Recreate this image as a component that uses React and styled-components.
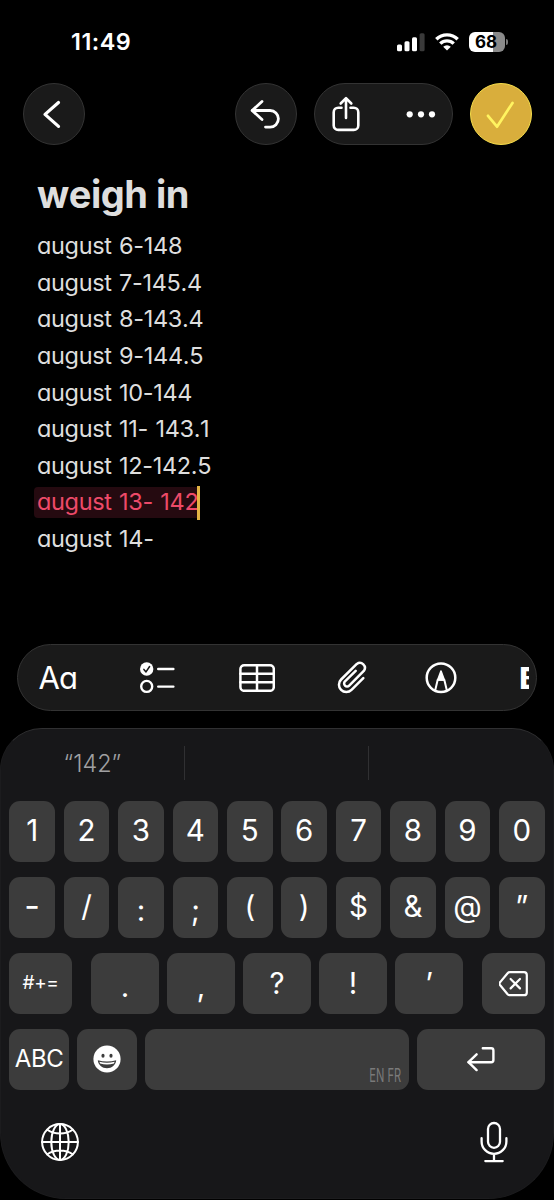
import React from 'react';
import styled, { createGlobalStyle } from 'styled-components';

const GlobalStyle = createGlobalStyle`
* {
  box-sizing: border-box;
}
body {
  margin: 0;
  background: #000;
  font-family: Inter, "Liberation Sans", sans-serif;
  font-feature-settings: "cv11";
  font-kerning: none;
}
svg {
  display: block;
  flex: none;
}
`;

const Phone = styled.div`
width: 554px;
height: 1200px;
background: #000;
color: #fff;
display: flex;
flex-direction: column;
overflow: hidden;
`;

const StatusBar = styled.div`
height: 83px;
padding: 0 46px 0 71px;
display: flex;
align-items: center;
justify-content: space-between;
`;
const Time = styled.div`
font-size: 23.4px;
font-weight: 600;
line-height: 28px;
letter-spacing: 0.5px;
`;
const StatusIcons = styled.div`
display: flex;
align-items: center;
gap: 10px;
`;
const Battery = styled.div`
display: flex;
align-items: center;
gap: 1px;
`;
const BatteryBody = styled.div`
width: 36px;
height: 20px;
border-radius: 6px;
background: linear-gradient(90deg, #fff ${p => p.$level}%, #8a8a8a ${p => p.$level}%);
color: #000;
font-size: 17px;
font-weight: 700;
line-height: 20px;
text-align: center;
padding-right: 2px;
`;
const BatteryTip = styled.div`
width: 2px;
height: 6px;
border-radius: 0 2px 2px 0;
background: #777;
`;

const NavBar = styled.div`
height: 62px;
padding: 0 22.5px 0 23px;
display: flex;
gap: 17px;
`;
const RoundButton = styled.button`
width: 62px;
height: 62px;
padding: 0;
border-radius: 50%;
border: 1px solid ${p => (p.$done ? '#f5dc4a' : '#333')};
background: ${p => (p.$done ? '#d9ae3c' : '#1a1a1a')};
color: ${p => (p.$done ? '#fff460' : '#fff')};
display: flex;
align-items: center;
justify-content: center;
margin-right: ${p => (p.$first ? 'auto' : '0')};
`;
const ButtonGroup = styled.div`
width: 139px;
height: 62px;
border-radius: 31px;
border: 1px solid #333;
background: #1a1a1a;
display: flex;
align-items: center;
justify-content: space-between;
padding: 0 15.5px 0 17.5px;
`;

const Note = styled.div`
height: 499px;
padding: 28px 37px 0;
`;
const Title = styled.h1`
margin: 0;
font-size: 38px;
line-height: 43px;
font-weight: 700;
letter-spacing: -0.5px;
color: #dedede;
`;
const Entries = styled.div`
padding-top: 12px;
`;
const Entry = styled.div`
height: 36.65px;
line-height: 36.65px;
font-size: 23.5px;
font-weight: 400;
letter-spacing: -0.33px;
word-spacing: 1.1px;
color: #dedede;
white-space: pre;
display: flex;
align-items: center;
`;
const Marked = styled.span`
height: 31px;
line-height: 30px;
margin-left: -3px;
padding-left: 3px;
border-radius: 4px 0 0 4px;
background: #250a10;
color: #ee4a69;
`;
const Caret = styled.span`
width: 2.5px;
height: 34px;
margin-left: -1px;
background: #e3b444;
`;

const Toolbar = styled.div`
width: 520px;
height: 67px;
margin-left: 17px;
flex: none;
border-radius: 34px;
border: 1px solid #333;
background: #1a1a1a;
`;
const ToolStrip = styled.div`
width: 511px;
height: 65px;
padding-left: 20.5px;
overflow: hidden;
display: flex;
align-items: center;
`;
const Tool = styled.div`
flex: none;
margin-left: ${p => p.$gap || 0}px;
`;
const FormatText = styled.div`
width: 38px;
font-size: 31px;
line-height: 36px;
letter-spacing: -0.8px;
`;
const BoldText = styled.div`
font-size: 30px;
line-height: 36px;
font-weight: 800;
`;

const Keyboard = styled.div`
height: 471px;
flex: none;
margin-top: 17px;
border-radius: 42px 42px 66px 66px;
border: 1px solid #1c1c1e;
border-top: 1.5px solid #303032;
background: #171719;
padding: 0 8.3px;
`;
const Suggestions = styled.div`
height: 72px;
margin: 0 -8.3px;
display: flex;
align-items: center;
`;
const Suggestion = styled.div`
flex: 1;
height: 34px;
line-height: 35px;
margin: 0 0 4px -0.6px;
border-left: ${p => (p.$divided ? '1.5px solid #303032' : 'none')};
font-size: 23.5px;
font-weight: 300;
text-align: center;
color: #a0a0a2;
`;
const KeyRow = styled.div`
display: flex;
justify-content: space-between;
height: 60.7px;
margin-bottom: 15.4px;
`;
const Key = styled.div`
width: ${p => p.$w || 45.7}px;
margin: 0 ${p => p.$mr || 0}px 0 ${p => p.$ml || 0}px;
height: 60.7px;
border-radius: 11px;
background: #3c3c3c;
display: flex;
align-items: center;
justify-content: center;
font-size: ${p => p.$size || 29.5}px;
font-weight: 400;
line-height: 36px;
letter-spacing: ${p => p.$track || 0}px;
padding-top: ${p => p.$drop || 0}px;
padding-bottom: ${p => (p.$lift === undefined ? 2 : p.$lift)}px;
`;
const SpaceKey = styled(Key)`
align-items: flex-end;
justify-content: flex-end;
padding: 0 7px 5px 0;
`;
const Languages = styled.span`
font-size: 18.5px;
line-height: 20px;
color: #7a7a7a;
white-space: nowrap;
transform: scaleX(0.6);
transform-origin: right center;
`;
const BottomRow = styled.div`
display: flex;
justify-content: space-between;
align-items: center;
padding: 16px 37px 0 32px;
`;

const stroke = { fill: 'none', stroke: 'currentColor', strokeLinecap: 'round', strokeLinejoin: 'round' };

const SignalIcon = () => (
  <svg width="28" height="20" viewBox="0 0 28 20" fill="#fff">
    <rect x="0" y="12.5" width="5" height="6.8" rx="1.5" />
    <rect x="7.5" y="9.3" width="5" height="10" rx="1.5" />
    <rect x="15" y="5.3" width="5" height="14" rx="1.5" />
    <rect x="22.6" y="1.3" width="5" height="18" rx="1.5" fill="#3a3a3a" />
  </svg>
);

const WifiIcon = () => (
  <svg width="24" height="20" viewBox="0 0 24 20" fill="none" stroke="#fff" strokeWidth="3.4">
    <path d="M1.3 7.3a15.2 15.2 0 0 1 21.4 0" />
    <path d="M5.3 11.6a9.5 9.5 0 0 1 13.4 0" />
    <path d="M12 18.6L8.2 14.8a5.4 5.4 0 0 1 7.6 0z" fill="#fff" stroke="none" />
  </svg>
);

const BackIcon = () => (
  <svg width="60" height="60" viewBox="1 1 60 60" {...stroke} strokeWidth="3.2">
    <path d="M35.5 19.5L22 31.4l13.5 12" />
  </svg>
);

const UndoIcon = () => (
  <svg width="60" height="60" viewBox="1.5 1 60 60" {...stroke} strokeWidth="2.8">
    <path d="M27.5 18.5L17.6 27.5l9.9 9" />
    <path d="M18 27.5h17.6a8.3 8.3 0 0 1 0 16.6H31" />
  </svg>
);

const ShareIcon = () => (
  <svg width="28" height="36" viewBox="0 0 28 36" {...stroke} strokeWidth="2.6">
    <path d="M9.5 11.7H6.2a4.5 4.5 0 0 0-4.5 4.5v13.2a4.5 4.5 0 0 0 4.5 4.5h15.6a4.5 4.5 0 0 0 4.5-4.5V16.2a4.5 4.5 0 0 0-4.5-4.5h-3.3" />
    <path d="M14 22V2.5M8.7 7.5L14 2.2l5.3 5.3" />
  </svg>
);

const MoreIcon = () => (
  <svg width="30" height="8" viewBox="0 0 30 8" fill="#fff">
    <circle cx="3.7" cy="4.3" r="3.1" />
    <circle cx="15" cy="4.3" r="3.1" />
    <circle cx="26" cy="4.3" r="3.1" />
  </svg>
);

const DoneIcon = () => (
  <svg width="60" height="60" viewBox="1.5 1 60 60" {...stroke} strokeWidth="2.7">
    <path d="M18.5 32.8l9 10.9L43 20" />
  </svg>
);

const ChecklistIcon = () => (
  <svg width="36" height="32" viewBox="0 0 36 32" {...stroke} strokeWidth="2.4">
    <circle cx="6.7" cy="7" r="6.7" fill="#fff" stroke="none" />
    <path d="M3.9 7.4l2.1 2.5 3.6-5.4" stroke="#1a1a1a" strokeWidth="1.5" />
    <circle cx="6.7" cy="24.4" r="5.5" />
    <path d="M18.2 7h15.2M18.2 24.6h15.2" />
  </svg>
);

const TableIcon = () => (
  <svg width="36" height="28" viewBox="0 0 36 28" {...stroke} strokeWidth="2.5">
    <rect x="1.4" y="1.3" width="33.4" height="25.5" rx="3.8" />
    <path d="M18 1.3v25.5M1.4 9.8h33.4M1.4 18.3h33.4" />
  </svg>
);

const ClipIcon = () => (
  <svg width="30" height="33" viewBox="0 0 30 33" {...stroke} strokeWidth="2.5">
    <path d="M26.3 17.1L14.5 28.9a7.3 7.3 0 0 1-10.4-10.4L19.8 2.9a5 5 0 0 1 7 7L12.2 24.6a2.95 2.95 0 0 1-4.2-4.2L18.7 9.8" />
  </svg>
);

const MarkupIcon = () => (
  <svg width="32" height="32" viewBox="0 0 32 32" {...stroke} strokeWidth="2.5">
    <circle cx="16" cy="15.7" r="14.3" />
    <path d="M10.2 28.3l2.5-10.5h6.6l2.5 10.5" strokeWidth="2" />
    <path d="M16 9l-3.3 9h6.6z" fill="#fff" strokeWidth="1.6" />
  </svg>
);

const DeleteIcon = () => (
  <svg width="30" height="26" viewBox="0.7 0 30 26" {...stroke} strokeWidth="2.2">
    <path d="M11.5 1.2h14.2a2.8 2.8 0 0 1 2.8 2.8v17.4a2.8 2.8 0 0 1-2.8 2.8H11.5a3 3 0 0 1-2.2-1L1.9 14.3a2.3 2.3 0 0 1 0-3.2l7.400-8.900a3 3 0 0 1 2.200-1z" />
    <path d="M12.3 8l9.4 9.4M21.7 8l-9.4 9.4" />
  </svg>
);

const EmojiIcon = () => (
  <svg width="28" height="28" viewBox="0 0 28 28">
    <circle cx="14" cy="14" r="13.6" fill="#fff" />
    <ellipse cx="10" cy="10.7" rx="1.6" ry="2" fill="#3c3c3c" />
    <ellipse cx="18" cy="10.7" rx="1.6" ry="2" fill="#3c3c3c" />
    <path d="M4.8 15.2q9.2 2.8 18.4 0c-.4 4.7-4.4 8-9.2 8s-8.8-3.3-9.2-8z" fill="#3c3c3c" />
    <path d="M6.4 16.7q7.6 1.9 15.2 0l-.6 1.8q-7 1.8-14 0z" fill="#fff" />
  </svg>
);

const ReturnIcon = () => (
  <svg width="28" height="26" viewBox="0 0 28 26" {...stroke} strokeWidth="2.4">
    <path d="M15.8 2.2h8.4a2.2 2.2 0 0 1 2.2 2.2v9.6a2.2 2.2 0 0 1-2.2 2.2H1.6" />
    <path d="M9.6 8.3L1.5 16.2l8.1 7.9" />
  </svg>
);

const GlobeIcon = () => (
  <svg width="38" height="38" viewBox="0 0 38 38" {...stroke} strokeWidth="2">
    <circle cx="19" cy="19" r="17.9" />
    <ellipse cx="19" cy="19" rx="8.7" ry="17.9" />
    <path d="M19 1v36M1 19h36M6.3 6.7c7 5 18.4 5 25.4 0M6.3 31.3c7-5 18.4-5 25.4 0" />
  </svg>
);

const MicIcon = () => (
  <svg width="28" height="42" viewBox="0 0 28 42" {...stroke} strokeWidth="2.3">
    <rect x="8" y="2" width="12" height="24.8" rx="6" />
    <path d="M1.6 17.2v3.2a12.4 12.4 0 0 0 24.8 0v-3.2M14 33v7M5.3 40.1h17.4" />
  </svg>
);

const entries = [
  'august 6-148',
  'august 7-145.4',
  'august 8-143.4',
  'august 9-144.5',
  'august 10-144',
  'august 11- 143.1',
  'august 12-142.5',
  'august 13- 142',
  'august 14-',
];
const current = 7;

const digits = ['1', '2', '3', '4', '5', '6', '7', '8', '9', '0'];
const symbols = ['-', '/', ':', ';', '(', ')', '$', '&', '@', '”'];
const punctuation = ['.', ',', '?', '!', '’'];

// low glyphs sit under the middle of their key
const drops = { ':': 7, ';': 7, '.': 7, ',': 7 };
const sizes = { '-': 34 };

const App = () => {
  return (
    <Phone>
      <GlobalStyle />
      <StatusBar>
        <Time>11:49</Time>
        <StatusIcons>
          <SignalIcon />
          <WifiIcon />
          <Battery>
            <BatteryBody $level={68}>68</BatteryBody>
            <BatteryTip />
          </Battery>
        </StatusIcons>
      </StatusBar>

      <NavBar>
        <RoundButton $first><BackIcon /></RoundButton>
        <RoundButton><UndoIcon /></RoundButton>
        <ButtonGroup>
          <ShareIcon />
          <MoreIcon />
        </ButtonGroup>
        <RoundButton $done><DoneIcon /></RoundButton>
      </NavBar>

      <Note>
        <Title>weigh in</Title>
        <Entries>
          {entries.map((text, i) => (
            <Entry key={text}>
              {i === current ? <><Marked>{text}</Marked><Caret /></> : text}
            </Entry>
          ))}
        </Entries>
      </Note>

      <Toolbar>
        <ToolStrip>
          <Tool><FormatText>Aa</FormatText></Tool>
          <Tool $gap={63.5}><ChecklistIcon /></Tool>
          <Tool $gap={62.5}><TableIcon /></Tool>
          <Tool $gap={62.5}><ClipIcon /></Tool>
          <Tool $gap={58}><MarkupIcon /></Tool>
          <Tool $gap={62.3}><BoldText>B</BoldText></Tool>
        </ToolStrip>
      </Toolbar>

      <Keyboard>
        <Suggestions>
          <Suggestion>“142”</Suggestion>
          <Suggestion $divided />
          <Suggestion $divided />
        </Suggestions>
        <KeyRow>
          {digits.map(d => <Key key={d}>{d}</Key>)}
        </KeyRow>
        <KeyRow>
          {symbols.map(s => <Key key={s} $drop={drops[s]} $size={sizes[s]}>{s}</Key>)}
        </KeyRow>
        <KeyRow>
          <Key $w={62.3} $mr={11} $size={19} $track={-0.5} $lift={1}>#+=</Key>
          {punctuation.map(p => <Key key={p} $w={67.5} $drop={drops[p]}>{p}</Key>)}
          <Key $w={62.3} $ml={11} $lift={0}><DeleteIcon /></Key>
        </KeyRow>
        <KeyRow>
          <Key $w={59.7} $size={24} $track={-0.3} $lift={1}>ABC</Key>
          <Key $w={59.7} $lift={1}><EmojiIcon /></Key>
          <SpaceKey $w={263.5}><Languages>EN FR</Languages></SpaceKey>
          <Key $w={128} $lift={1}><ReturnIcon /></Key>
        </KeyRow>
        <BottomRow>
          <GlobeIcon />
          <MicIcon />
        </BottomRow>
      </Keyboard>
    </Phone>
  );
};

export default App;
